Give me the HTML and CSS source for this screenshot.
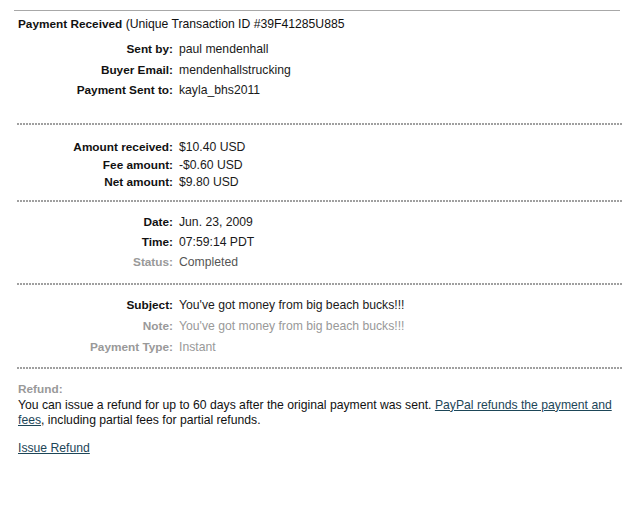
FILE: index.html
```html
<!DOCTYPE html>
<html>
<head>
    <title>Payment Received</title>
    <link rel="stylesheet" href="styles.css">
</head>
<body>
    <div class="receipt">
        <div class="section first">
            <div class="title"><b>Payment Received</b> (Unique Transaction ID #39F41285U885</div>
            <div class="row"><span class="label">Sent by:</span><span class="value">paul mendenhall</span></div>
            <div class="row"><span class="label">Buyer Email:</span><span class="value">mendenhallstrucking</span></div>
            <div class="row"><span class="label">Payment Sent to:</span><span class="value">kayla_bhs2011</span></div>
        </div>
        <div class="dots"></div>

        <div class="section amounts">
            <div class="row"><span class="label">Amount received:</span><span class="value">$10.40 USD</span></div>
            <div class="row tight"><span class="label">Fee amount:</span><span class="value">-$0.60 USD</span></div>
            <div class="row tight"><span class="label">Net amount:</span><span class="value">$9.80 USD</span></div>
        </div>
        <div class="dots"></div>

        <div class="section dates">
            <div class="row"><span class="label">Date:</span><span class="value">Jun. 23, 2009</span></div>
            <div class="row"><span class="label">Time:</span><span class="value">07:59:14 PDT</span></div>
            <div class="row"><span class="label muted">Status:</span><span class="value soft">Completed</span></div>
        </div>
        <div class="dots"></div>

        <div class="section notes">
            <div class="row"><span class="label">Subject:</span><span class="value">You've got money from big beach bucks!!!</span></div>
            <div class="row"><span class="label muted">Note:</span><span class="value muted">You've got money from big beach bucks!!!</span></div>
            <div class="row"><span class="label muted">Payment Type:</span><span class="value muted">Instant</span></div>
        </div>
        <div class="dots"></div>

        <div class="refund">
            <div class="refund-title">Refund:</div>
            <p>You can issue a refund for up to 60 days after the original payment was sent. <a href="#">PayPal refunds the payment and fees</a>, including partial fees for partial refunds.</p>
            <a class="issue" href="#">Issue Refund</a>
        </div>
    </div>
</body>
</html>
```

FILE: styles.css
```css
body {
    margin: 0;
    background: #fff;
    font-family: "Liberation Sans", Arial, sans-serif;
    font-size: 12.2px;
    color: #111;
}

.receipt {
    width: 606px;
    margin: 10px 0 0 14px;
    border-top: 1px solid #a8a8a8;
}

.section {
    padding-left: 4px;
}

.first {
    padding-top: 3px;
    padding-bottom: 22px;
}

.title {
    line-height: 20px;
    margin-bottom: 5px;
}

.title b {
    font-size: 11.8px;
}

.row {
    display: flex;
    line-height: 20.5px;
}

.label {
    width: 155px;
    text-align: right;
    font-weight: bold;
    font-size: 11.8px;
    color: #111;
}

.value {
    margin-left: 6px;
    color: #1a1a1a;
}

.muted {
    color: #999;
}

.soft {
    color: #555;
}

.amounts {
    padding-top: 12px;
    padding-bottom: 9px;
}

.amounts .row {
    line-height: 20px;
}

.amounts .tight {
    line-height: 17px;
}

.dates {
    padding-top: 10px;
    padding-bottom: 11px;
}

.dates .row {
    line-height: 20px;
}

.notes {
    padding-top: 10px;
    padding-bottom: 9px;
}

.notes .row {
    line-height: 21px;
}

.dots {
    height: 2px;
    margin-left: 3px;
    width: 605px;
    background-image: repeating-linear-gradient(90deg, #a0a0a0 0, #a0a0a0 2px, transparent 2px, transparent 3px);
}

.refund {
    padding: 12px 0 0 4px;
}

.refund-title {
    font-weight: bold;
    font-size: 11.8px;
    color: #999;
    line-height: 17px;
}

.refund p {
    margin: 0 0 12px;
    line-height: 15px;
    width: 600px;
}

a {
    color: #1d4658;
    text-decoration: underline;
}

.issue {
    line-height: 16px;
}
```
